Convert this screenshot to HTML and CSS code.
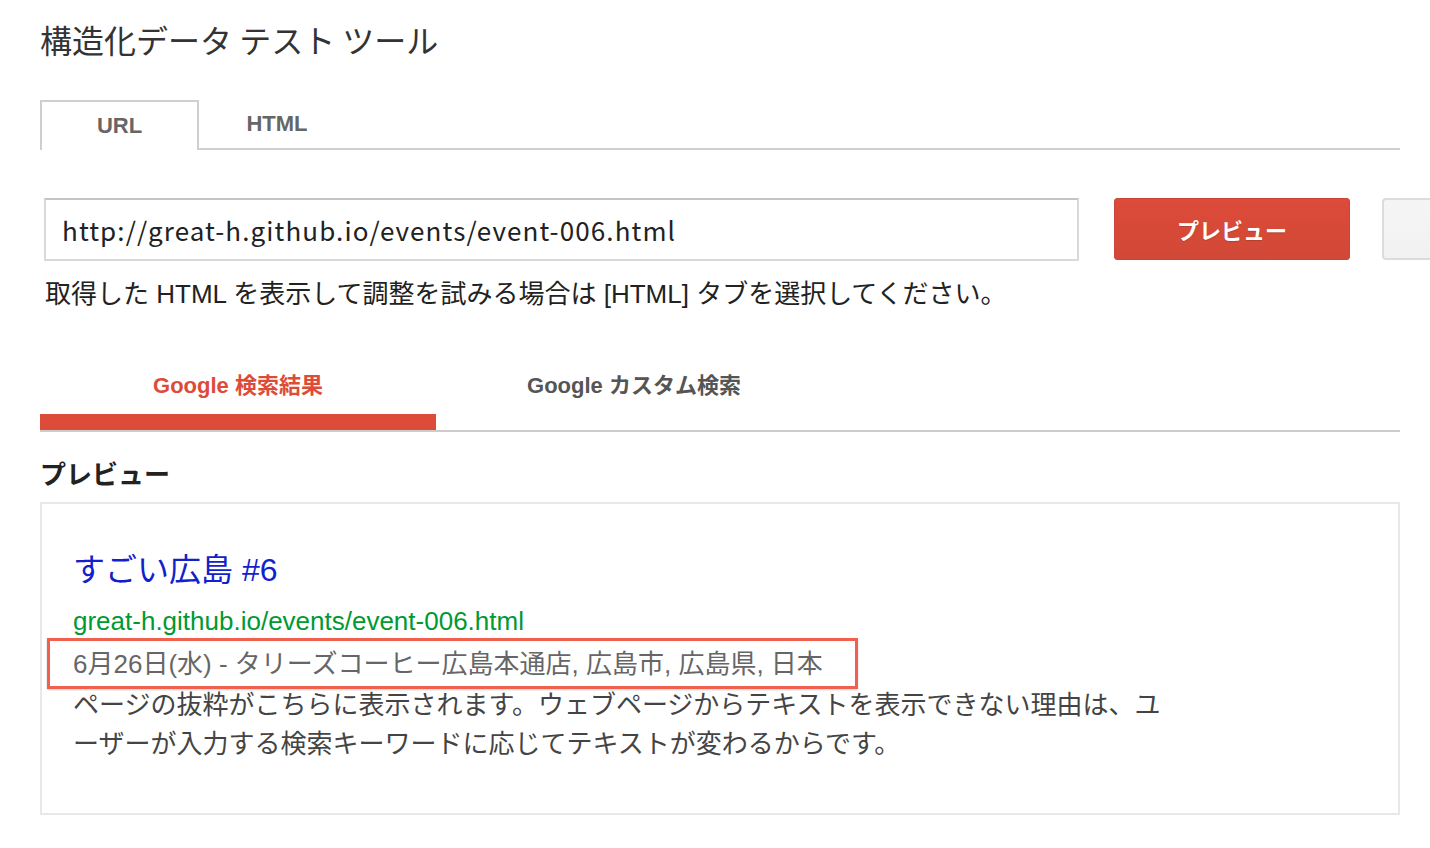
FILE: index.html
```html
<!DOCTYPE html>
<html lang="ja">
<head>
<meta charset="utf-8">
<title>構造化データ テスト ツール</title>
<link rel="stylesheet" href="styles.css">
</head>
<body>
<div class="page">
  <h1 class="title">構造化データ テスト ツール</h1>

  <div class="tabs">
    <div class="tab tab-active">URL</div>
    <div class="tab">HTML</div>
    <div class="tab-fill"></div>
  </div>

  <div class="url-row">
    <div class="url-input">http://great-h.github.io/events/event-006.html</div>
    <button class="btn-red">プレビュー</button>
    <button class="btn-gray"></button>
  </div>
  <p class="hint">取得した HTML を表示して調整を試みる場合は [HTML] タブを選択してください。</p>

  <div class="result-tabs">
    <div class="rtab rtab-active">Google 検索結果</div>
    <div class="rtab">Google カスタム検索</div>
  </div>

  <h2 class="preview-heading">プレビュー</h2>

  <div class="preview-box">
    <div class="res-title">すごい広島 #6</div>
    <div class="res-url">great-h.github.io/events/event-006.html</div>
    <div class="res-date">6月26日(水) - タリーズコーヒー広島本通店, 広島市, 広島県, 日本</div>
    <div class="res-snippet">ページの抜粋がこちらに表示されます。ウェブページからテキストを表示できない理由は、ユ<br>ーザーが入力する検索キーワードに応じてテキストが変わるからです。</div>
  </div>
</div>
</body>
</html>
```

FILE: styles.css
```css
html, body {
  margin: 0;
  padding: 0;
  background: #fff;
  overflow-x: hidden;
}

body {
  font-family: "Liberation Sans", "Noto Sans CJK JP", sans-serif;
  color: #222;
}

.page {
  padding: 19px 0 0 40px;
  width: 1360px;
}

.title {
  margin: 0;
  font-family: "Noto Sans CJK JP", sans-serif;
  font-weight: 400;
  font-size: 32px;
  line-height: 40px;
  color: #333;
}

/* URL / HTML tabs */
.tabs {
  display: flex;
  margin-top: 41px;
  height: 50px;
}

.tab {
  flex: none;
  width: 156px;
  box-sizing: border-box;
  display: flex;
  align-items: center;
  justify-content: center;
  font-weight: 700;
  font-size: 22px;
  color: #666;
  border-bottom: 2px solid #cfcfcf;
}

.tab-active {
  width: 159px;
  border: 2px solid #cfcfcf;
  border-bottom: none;
}

.tab-fill {
  flex: 1;
  border-bottom: 2px solid #cfcfcf;
}

/* URL input row */
.url-row {
  display: flex;
  align-items: flex-start;
  margin-top: 48px;
  margin-left: 4px;
}

.url-input {
  flex: none;
  box-sizing: border-box;
  width: 1035px;
  height: 63px;
  border: 2px solid #d9d9d9;
  border-top-color: #c4c4c4;
  padding-left: 16px;
  display: flex;
  align-items: center;
  font-family: "Noto Sans CJK JP", sans-serif;
  font-size: 26px;
  letter-spacing: 1.1px;
  color: #222;
}

.btn-red {
  flex: none;
  box-sizing: border-box;
  margin-left: 35px;
  width: 236px;
  height: 62px;
  border: 1px solid #c9473a;
  border-radius: 3px;
  background: linear-gradient(#dd4b39, #d14836);
  color: #fff;
  font-family: "Noto Sans CJK JP", sans-serif;
  font-weight: 700;
  font-size: 22px;
  text-shadow: 0 1px 1px rgba(0, 0, 0, 0.15);
  padding: 0;
}

.btn-gray {
  box-sizing: border-box;
  flex: none;
  margin-left: 32px;
  width: 110px;
  height: 62px;
  border: 2px solid #dcdcdc;
  border-radius: 4px;
  background: linear-gradient(#f5f5f5, #f1f1f1);
  padding: 0;
}

.hint {
  margin: 17px 0 0 5px;
  font-size: 26px;
  line-height: 32px;
  color: #222;
}

/* Result tabs */
.result-tabs {
  display: flex;
  margin-top: 61px;
  border-bottom: 2px solid #cccccc;
}

.rtab {
  flex: none;
  width: 396px;
  text-align: center;
  font-weight: 700;
  font-size: 22px;
  line-height: 30px;
  padding-bottom: 13px;
  border-bottom: 16px solid transparent;
  color: #555;
}

.rtab-active {
  color: #dd4b39;
  border-bottom-color: #dd4b39;
}

.preview-heading {
  margin: 26px 0 0 0;
  font-family: "Noto Sans CJK JP", sans-serif;
  font-weight: 700;
  font-size: 26px;
  line-height: 30px;
  color: #222;
}

/* Preview box */
.preview-box {
  box-sizing: border-box;
  margin-top: 14px;
  width: 1360px;
  border: 2px solid #e8e8e8;
  padding: 46px 0 49px 31px;
}

.res-title {
  font-size: 32px;
  line-height: 40px;
  color: #1122cc;
}

.res-url {
  margin-top: 13px;
  font-size: 26px;
  line-height: 36px;
  color: #009933;
}

.res-date {
  display: inline-block;
  margin-top: -1px;
  margin-left: -26px;
  padding: 3px 32px 2px 23px;
  border: 3px solid #f0604f;
  box-shadow: 0 1px 2px rgba(0, 0, 0, 0.2);
  font-size: 26px;
  line-height: 40px;
  color: #666;
}

.res-snippet {
  margin-top: -3px;
  font-size: 26px;
  line-height: 39px;
  color: #444;
}
```
